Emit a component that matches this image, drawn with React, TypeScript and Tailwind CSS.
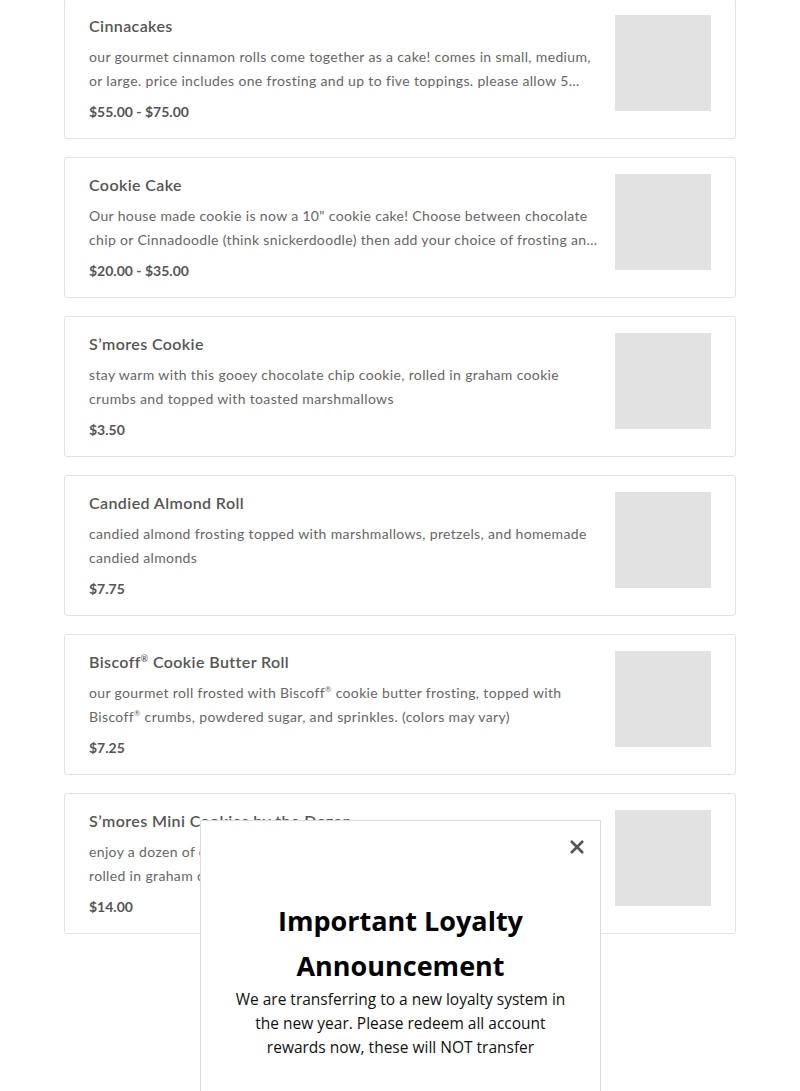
import React from 'react';

type Item = {
  name: React.ReactNode;
  key: string;
  description: React.ReactNode;
  price: string;
};

const Reg = () => <span className="align-super text-[0.55em] leading-none">®</span>;

const items: Item[] = [
  {
    key: 'cinnacakes',
    name: 'Cinnacakes',
    description:
      'our gourmet cinnamon rolls come together as a cake! comes in small, medium, or large. price includes one frosting and up to five toppings. please allow 5 days notice for all cinnacake orders.',
    price: '$55.00 - $75.00',
  },
  {
    key: 'cookie-cake',
    name: 'Cookie Cake',
    description:
      'Our house made cookie is now a 10" cookie cake! Choose between chocolate chip or Cinnadoodle (think snickerdoodle) then add your choice of frosting and toppings.',
    price: '$20.00 - $35.00',
  },
  {
    key: 'smores-cookie',
    name: 'S’mores Cookie',
    description:
      'stay warm with this gooey chocolate chip cookie, rolled in graham cookie crumbs and topped with toasted marshmallows',
    price: '$3.50',
  },
  {
    key: 'almond',
    name: 'Candied Almond Roll',
    description:
      'candied almond frosting topped with marshmallows, pretzels, and homemade candied almonds',
    price: '$7.75',
  },
  {
    key: 'biscoff',
    name: (
      <>
        Biscoff<Reg /> Cookie Butter Roll
      </>
    ),
    description: (
      <>
        our gourmet roll frosted with Biscoff<Reg /> cookie butter frosting, topped with Biscoff<Reg /> crumbs,
        powdered sugar, and sprinkles. (colors may vary)
      </>
    ),
    price: '$7.25',
  },
  {
    key: 'mini',
    name: 'S’mores Mini Cookies by the Dozen',
    description: (
      <>
        enjoy a dozen of our mini s’mores cookies, gooey chocolate chip cookies
        <br />
        rolled in graham cookie crumbs and topped with toasted marshmallows
      </>
    ),
    price: '$14.00',
  },
];

function MenuCard({ item }: { item: Item }) {
  return (
    <div className="flex gap-4 rounded-[3px] border border-[#e2e2e2] bg-white px-6 pt-4 pb-4">
      <div className="-mt-px min-w-0 flex-1">
        <h3 className="text-[16px] font-semibold leading-6 tracking-[0.4px] text-[#555]">{item.name}</h3>
        <p className="mt-[7px] line-clamp-2 text-[14px] leading-[23.5px] tracking-[0.35px] text-[#666]">
          {item.description}
        </p>
        <div className="mt-[10px] text-[14px] font-bold leading-5 text-[#555]">{item.price}</div>
      </div>
      <div className="h-24 w-24 shrink-0 bg-[#e2e2e2]" />
    </div>
  );
}

function LoyaltyModal() {
  return (
    <div className="fixed left-[200px] top-[820px] h-[300px] w-[401px] border border-[#dcdcdc] bg-white">
      <button className="absolute right-[15px] top-[18px] text-[#555]">
        <svg width="16" height="16" viewBox="0 0 16 16" fill="none">
          <path d="M2 2L14 14M14 2L2 14" stroke="currentColor" strokeWidth="2.6" />
        </svg>
      </button>
      <div className="px-7 pt-[77px] text-center" style={{ fontFamily: '"Open Sans", sans-serif' }}>
        <h2 className="text-[27px] font-bold leading-[45px] text-black">
          Important Loyalty Announcement
        </h2>
        <p className="mx-auto -mt-px max-w-[340px] text-[15.5px] leading-6 text-[#111]">
          We are transferring to a new loyalty system in the new year. Please redeem all account rewards now, these will NOT transfer
        </p>
      </div>
    </div>
  );
}

export default function App() {
  return (
    <div className="min-h-[1091px] bg-white" style={{ fontFamily: 'Lato, "Liberation Sans", sans-serif' }}>
      <div className="mx-16 -mt-[2px] flex flex-col gap-[18px]">
        {items.map((item) => (
          <MenuCard key={item.key} item={item} />
        ))}
      </div>
      <LoyaltyModal />
    </div>
  );
}
